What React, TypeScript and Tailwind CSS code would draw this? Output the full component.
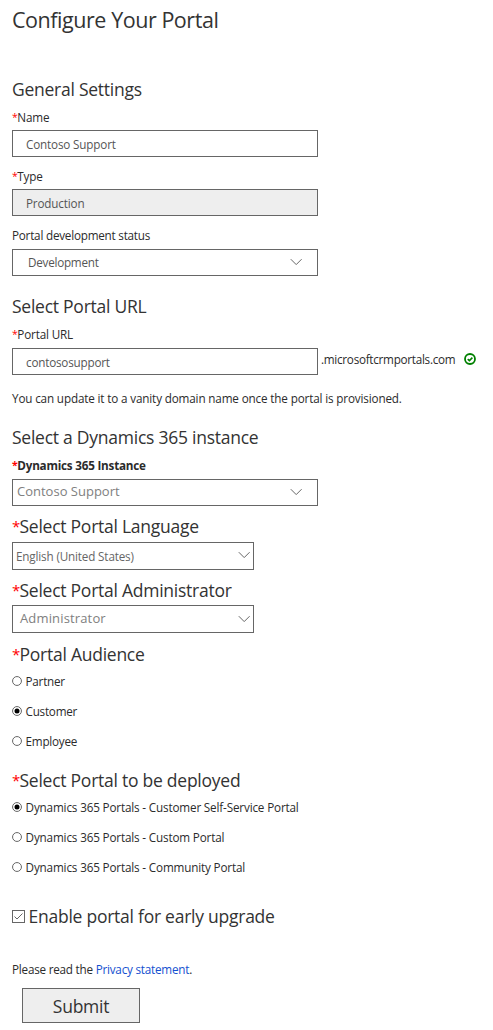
import type { ReactNode } from "react";

function Heading({ children, required, className = "" }: { children: ReactNode; required?: boolean; className?: string }) {
  return (
    <h2 className={`flex h-6 text-[17.5px] leading-6 font-normal tracking-[-0.25px] whitespace-nowrap text-[#333] ${className}`}>
      {required && <span className="w-[7.5px] text-[15px] text-[#ff0000]">*</span>}
      <span>{children}</span>
    </h2>
  );
}

function Label({ children, required, className = "" }: { children: ReactNode; required?: boolean; className?: string }) {
  return (
    <div className={`flex h-4 whitespace-nowrap ${className}`}>
      {required && <span className="w-[5.3px] text-[10.5px] text-[#ff0000]">*</span>}
      <span>{children}</span>
    </div>
  );
}

function Chevron({ className = "" }: { className?: string }) {
  return (
    <svg width="12" height="8" viewBox="0 0 12 8" fill="none" stroke="#666" strokeWidth="1" className={`shrink-0 ${className}`}>
      <path d="M0.8 1.2 L6.2 6.6 L11.6 1.2" />
    </svg>
  );
}

function Select({ value, className, chevronClass }: { value: string; className: string; chevronClass?: string }) {
  return (
    <div className={`flex justify-between border border-[#666] whitespace-nowrap ${className}`}>
      <span>{value}</span>
      <Chevron className={chevronClass} />
    </div>
  );
}

function Radio({ label, checked }: { label: string; checked?: boolean }) {
  return (
    <div className="flex h-4 gap-[3.6px] whitespace-nowrap">
      <svg width="10" height="10" viewBox="0 0 10 10" className="mt-[3px] shrink-0">
        <circle cx="5" cy="5" r="4.45" fill="#fff" stroke="#666" strokeWidth="1" />
        {checked && <circle cx="5" cy="5" r="2.5" fill="#000" />}
      </svg>
      <span>{label}</span>
    </div>
  );
}

export default function App() {
  return (
    <main className="h-[1030px] w-[493px] overflow-hidden bg-white pt-[6px] pl-3 font-['Open_Sans','Noto_Sans',sans-serif] text-[11.7px] leading-4 tracking-[-0.16px] text-[#2b2b2b]">
      <h1 className="h-7 text-[21.5px] leading-7 font-normal tracking-[-0.45px] text-[#333]">Configure Your Portal</h1>

      <Heading className="mt-[43px]">General Settings</Heading>
      <Label required className="mt-2">Name</Label>
      <div className="mt-[5px] h-[27px] w-[306px] border border-[#666] pt-[5px] pl-[13px] text-[#555]">Contoso Support</div>
      <Label required className="mt-[11px]">Type</Label>
      <div className="mt-[5px] h-[27px] w-[306px] border border-[#666] bg-[#eee] pt-[5px] pl-[13px] text-[#555]">Production</div>
      <Label className="mt-[11px]"><span className="tracking-[-0.22px]">Portal development status</span></Label>
      <Select value="Development" className="mt-1.5 h-[27px] w-[306px] items-start pt-1 pr-[15px] pl-[15px] tracking-[-0.25px] text-[#555]" chevronClass="mt-[4px]" />

      <Heading className="mt-[18px]">Select Portal URL</Heading>
      <Label required className="mt-2">Portal URL</Label>
      <div className="mt-1.5 flex h-[27px]">
        <div className="w-[306px] border border-[#666] pt-[5px] pl-[13px] tracking-[-0.2px] text-[#555]">contososupport</div>
        <span className="mt-[3px] ml-[3px] w-[141px] tracking-[-0.27px]">.microsoftcrmportals.com</span>
        <svg width="12" height="12" viewBox="0 0 12 12" fill="none" stroke="#008000" className="mt-[5px] ml-[2px]">
          <circle cx="6" cy="6" r="5" strokeWidth="1.8" />
          <path d="M3.7 6.1 L5.4 7.6 L8.4 4.6" strokeWidth="1.5" />
        </svg>
      </div>
      <p className="mt-[15px] h-4 tracking-[-0.15px] whitespace-nowrap">You can update it to a vanity domain name once the portal is provisioned.</p>

      <Heading className="mt-[19px]">Select a Dynamics 365 instance</Heading>
      <Label required className="mt-2 font-bold tracking-[-0.22px]">Dynamics 365 Instance</Label>
      <Select value="Contoso Support" className="mt-1.5 h-[27px] w-[306px] items-start pt-[3px] pr-[15px] pl-1 text-[13px] tracking-normal text-[#808080]" chevronClass="mt-[5px]" />

      <Heading required className="mt-2">Select Portal Language</Heading>
      <Select value="English (United States)" className="mt-1 h-7 w-[242px] items-start pt-[5px] pr-[3px] pl-[3px] text-[#666]" chevronClass="mt-[3px]" />

      <Heading required className="mt-2">Select Portal Administrator</Heading>
      <Select value="Administrator" className="mt-[3px] h-7 w-[242px] items-start pt-1 pr-[3px] pl-[7px] text-[13px] tracking-[0.15px] text-[#808080]" chevronClass="mt-[5px]" />

      <Heading required className="mt-[9px]">Portal Audience</Heading>
      <div className="mt-[7px] flex flex-col gap-3.5 tracking-[-0.25px]">
        <Radio label="Partner" />
        <Radio label="Customer" checked />
        <Radio label="Employee" />
      </div>

      <Heading required className="mt-[19px]">Select Portal to be deployed</Heading>
      <div className="mt-[7px] flex flex-col gap-3.5">
        <Radio label="Dynamics 365 Portals - Customer Self-Service Portal" checked />
        <Radio label="Dynamics 365 Portals - Custom Portal" />
        <Radio label="Dynamics 365 Portals - Community Portal" />
      </div>

      <div className="mt-[29px] flex h-6 gap-[3.5px]">
        <svg width="13" height="13" viewBox="0 0 13 13" fill="none" stroke="#666" className="mt-[6px] shrink-0">
          <rect x="0.5" y="0.5" width="12" height="12" />
          <path d="M2.5 6.5 L5 9 L10.5 3.5" />
        </svg>
        <Heading>Enable portal for early upgrade</Heading>
      </div>

      <p className="mt-[33px] h-4 tracking-[-0.22px]">
        Please read the <a className="text-[#1450d0]">Privacy statement</a>.
      </p>
      <button className="mt-[11px] ml-2.5 block h-[35px] w-[118px] border border-[#666] bg-[#eee] pt-px text-center text-[17.5px] leading-8 tracking-[-0.25px] text-[#333]">Submit</button>
    </main>
  );
}
